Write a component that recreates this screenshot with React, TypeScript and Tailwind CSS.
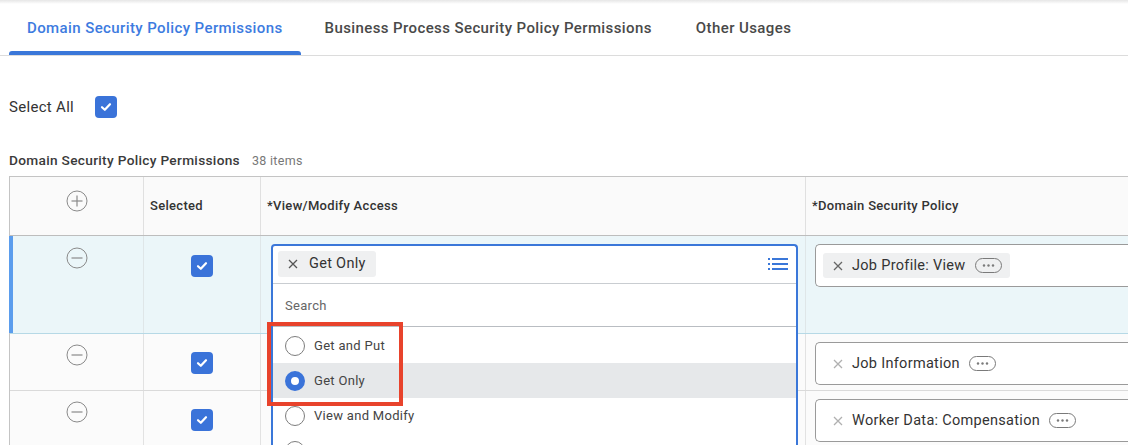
import React from 'react';

const font = { fontFamily: 'Roboto, "Liberation Sans", sans-serif' };

function CircleIcon({ plus }: { plus?: boolean }) {
  return (
    <svg width="22" height="22" viewBox="0 0 22 22" fill="none">
      <circle cx="11" cy="11" r="10" stroke="#8a8a8a" strokeWidth="1" />
      <line x1="5.5" y1="11" x2="16.5" y2="11" stroke="#8a8a8a" strokeWidth="1.2" />
      {plus && <line x1="11" y1="5.5" x2="11" y2="16.5" stroke="#8a8a8a" strokeWidth="1.2" />}
    </svg>
  );
}

function Check() {
  return (
    <div className="flex h-[22px] w-[22px] items-center justify-center rounded-[4px] bg-[#3a73d9]">
      <svg width="12" height="10" viewBox="0 0 12 10" fill="none">
        <path d="M2 5.2 L4.8 7.8 L10 2.2" stroke="white" strokeWidth="2.2" strokeLinecap="round" strokeLinejoin="round" />
      </svg>
    </div>
  );
}

function X({ color }: { color: string }) {
  return (
    <svg width="10" height="10" viewBox="0 0 10 10" fill="none">
      <path d="M1 1 L9 9 M9 1 L1 9" stroke={color} strokeWidth="1.3" />
    </svg>
  );
}

function More() {
  return (
    <svg width="27" height="15" viewBox="0 0 27 15" fill="none">
      <rect x="0.5" y="0.5" width="26" height="14" rx="7" stroke="#7a7a7a" />
      <circle cx="9" cy="7.5" r="1.2" fill="#7a7a7a" />
      <circle cx="13.5" cy="7.5" r="1.2" fill="#7a7a7a" />
      <circle cx="18" cy="7.5" r="1.2" fill="#7a7a7a" />
    </svg>
  );
}

function ListIcon() {
  return (
    <svg width="20" height="14" viewBox="0 0 20 14" fill="none">
      <g fill="#3a77d9">
        <rect x="0" y="1" width="2" height="2" />
        <rect x="0" y="6" width="2" height="2" />
        <rect x="0" y="11" width="2" height="2" />
        <rect x="4" y="1" width="16" height="2" />
        <rect x="4" y="6" width="16" height="2" />
        <rect x="4" y="11" width="16" height="2" />
      </g>
    </svg>
  );
}

function Radio({ on }: { on?: boolean }) {
  return on ? (
    <div className="h-[20px] w-[20px] rounded-full border-[6px] border-[#3a73d9] bg-white" />
  ) : (
    <div className="h-[20px] w-[20px] rounded-full border border-[#7d7d7d] bg-white" />
  );
}

function PolicyBox({ label, chip }: { label: string; chip?: boolean }) {
  return (
    <div className="flex h-[43px] w-[330px] items-center rounded-l-[5px] border border-r-0 border-[#9a9a9a] bg-white pl-[7px]">
      <div className={`flex h-[25px] items-center gap-[9px] rounded-[3px] pl-[10px] pr-[8px] ${chip ? 'bg-[#eff0f1]' : ''}`}>
        <X color={chip ? '#666' : '#b0b0b0'} />
        <span className="text-[14.5px] leading-[18px] text-[#333]">{label}</span>
        <More />
      </div>
    </div>
  );
}

// the fourth option's label sits below the fold
const options = ['Get and Put', 'Get Only', 'View and Modify', ''];

export default function App() {
  return (
    <div className="relative h-[445px] w-[1128px] overflow-hidden bg-white tracking-[0.3px]" style={font}>
      <div className="h-[4px] bg-gradient-to-b from-[#e6e6e6] to-white" />

      <div className="flex h-[52px] items-end gap-[4px] border-b border-[#dcdcdc] pl-[9px] tracking-[0.4px]">
        <div className="flex h-full flex-col justify-between">
          <div className="flex flex-1 items-center px-[18px] pt-[2px] text-[15px] font-medium text-[#3d7be0]">
            Domain Security Policy Permissions
          </div>
          <div className="h-[4px] rounded-t-[3px] bg-[#3a77d9]" />
        </div>
        <div className="flex h-full items-center px-[20px] pt-[2px] pb-[4px] text-[15px] font-medium text-[#494949]">
          Business Process Security Policy Permissions
        </div>
        <div className="flex h-full items-center px-[20px] pt-[2px] pb-[4px] text-[15px] font-medium text-[#494949]">
          Other Usages
        </div>
      </div>

      <div className="ml-[9px] mt-[40px] flex h-[22px] items-center gap-[21px]">
        <span className="text-[15px] leading-[22px] text-[#333]">Select All</span>
        <Check />
      </div>

      <div className="ml-[9px] mt-[34px] flex h-[16px] items-baseline gap-[12px] leading-[16px]">
        <span className="text-[13.7px] font-medium text-[#3a3a3a]">Domain Security Policy Permissions</span>
        <span className="text-[12.5px] text-[#777]">38 items</span>
      </div>

      <div className="relative ml-[9px] mt-[8px] w-[1130px] border-l border-t border-[#c4c4c4]">
        <div className="grid h-[59px] grid-cols-[134px_117px_545px_1fr] border-b border-[#bdbdbd] bg-[#fafafa] text-[13px] font-medium text-[#333]">
          <div className="flex justify-center border-r border-[#e0e0e0] pt-[13px]">
            <CircleIcon plus />
          </div>
          <div className="flex items-center border-r border-[#e0e0e0] pl-[6px]">Selected</div>
          <div className="flex items-center border-r border-[#e0e0e0] pl-[6px]">*View/Modify Access</div>
          <div className="flex items-center pl-[6px]">*Domain Security Policy</div>
        </div>

        <div className="relative grid h-[98px] grid-cols-[134px_117px_545px_1fr] border-b border-[#b6d9e6] bg-[#ebf6f9]">
          <div className="absolute bottom-0 left-[-1px] top-0 w-[4px] bg-[#5b9ded]" />
          <div className="flex justify-center border-r border-[#dfe6e8] pt-[11px]">
            <CircleIcon />
          </div>
          <div className="flex justify-center border-r border-[#dfe6e8] pt-[19px]">
            <Check />
          </div>
          <div className="border-r border-[#dfe6e8]" />
          <div className="pl-[9px] pt-[8px]">
            <PolicyBox label="Job Profile: View" chip />
          </div>
        </div>

        {['Job Information', 'Worker Data: Compensation'].map((label) => (
          <div
            key={label}
            className="grid h-[57px] grid-cols-[134px_117px_545px_1fr] border-b border-[#dadada] bg-[#fbfbfb]"
          >
            <div className="flex justify-center border-r border-[#e2e2e2] pt-[10px]">
              <CircleIcon />
            </div>
            <div className="flex justify-center border-r border-[#e2e2e2] pt-[18px]">
              <Check />
            </div>
            <div className="border-r border-[#e2e2e2]" />
            <div className="pl-[9px] pt-[8px]">
              <PolicyBox label={label} />
            </div>
          </div>
        ))}

        <div className="absolute left-[261px] top-[67px] w-[527px] rounded-t-[4px] border-2 border-b-0 border-[#3a77d9] bg-white">
          <div className="flex h-[38px] items-start justify-between border-b border-[#c9cdd1] pl-[5px] pr-[8px] pt-[5px]">
            <div className="flex h-[26px] items-center gap-[11px] rounded-[3px] bg-[#eff0f1] pl-[10px] pr-[10px]">
              <X color="#555" />
              <span className="text-[14.5px] text-[#333]">Get Only</span>
            </div>
            <div className="pt-[6px]">
              <ListIcon />
            </div>
          </div>
          <div className="flex h-[43px] items-center border-b border-[#b9bdc2] pl-[12px] pt-[2px] text-[13px] text-[#666]">
            Search
          </div>
          <div className="pt-[1px]">
            {options.map((o, i) => (
              <div
                key={i}
                className={`flex h-[35px] items-center gap-[9px] pl-[12px] text-[13px] text-[#444] ${o === 'Get Only' ? 'bg-[#e6e8ea]' : ''}`}
              >
                <Radio on={o === 'Get Only'} />
                <span>{o}</span>
              </div>
            ))}
          </div>
        </div>
      </div>

      <div className="absolute left-[267px] top-[322px] h-[84px] w-[136px] border-4 border-[#e8432c]" />
    </div>
  );
}
